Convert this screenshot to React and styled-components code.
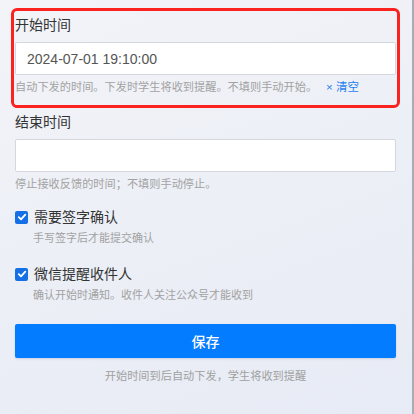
import React from 'react';
import styled, { createGlobalStyle } from 'styled-components';

const GlobalStyle = createGlobalStyle`
  html, body {
    margin: 0;
    padding: 0;
  }
  body {
    font-family: "Liberation Sans", "Noto Sans CJK SC", sans-serif;
    background: #eceff6;
  }
`;

const Page = styled.div`
  box-sizing: border-box;
  width: 414px;
  min-height: 414px;
  padding: 12px 16px 20px 15px;
  background: linear-gradient(160deg, #f3f4f8 0%, #eceff6 50%, #e7ebf5 100%);
  border-right: 2px solid #a9acb4;
`;

const Field = styled.div`
  padding: 3px 0 9px;
  border-radius: 2px;
  outline: ${p => (p.$highlight ? '3px solid #fa2320' : 'none')};
  outline-offset: 1px;
  margin-bottom: 8px;
`;

const Label = styled.div`
  font-size: 14px;
  line-height: 20px;
  color: #333;
  margin-bottom: 7px;
`;

const Input = styled.input`
  box-sizing: border-box;
  display: block;
  width: 100%;
  height: 33px;
  padding: 0 11px;
  border: 1px solid #d4d7de;
  border-radius: 2px;
  background: #fff;
  font-family: "Liberation Sans", "Noto Sans CJK SC", sans-serif;
  font-size: 14px;
  color: #555;
  outline: none;
`;

const Help = styled.div`
  margin-top: 4px;
  font-size: 11.2px;
  line-height: 16px;
  color: #a2a2a2;
  white-space: nowrap;
`;

const Clear = styled.span`
  margin-left: 9px;
  color: #1f7ff0;
  font-size: 11.5px;
`;

const Check = styled.div`
  margin-top: ${p => p.$top}px;
`;

const CheckRow = styled.label`
  display: flex;
  align-items: center;
  gap: 6px;
  font-size: 14px;
  line-height: 20px;
  color: #333;
`;

const Box = styled.span`
  display: inline-flex;
  align-items: center;
  justify-content: center;
  width: 13px;
  height: 13px;
  border-radius: 2px;
  background: #1570e6;
`;

const CheckDesc = styled.div`
  margin: 3px 0 0 18px;
  font-size: 11px;
  line-height: 16px;
  color: #a2a2a2;
`;

const SaveButton = styled.button`
  display: block;
  width: 100%;
  height: 34px;
  margin-top: 21px;
  border: none;
  border-radius: 2px;
  background: #047cff;
  color: #fff;
  font-family: "Liberation Sans", "Noto Sans CJK SC", sans-serif;
  font-size: 14px;
  font-weight: 500;
  box-shadow: 0 1px 2px rgba(40, 60, 110, 0.15);
`;

const Footer = styled.div`
  margin-top: 10px;
  text-align: center;
  font-size: 11.2px;
  line-height: 16px;
  color: #a0a0a0;
`;

const Tick = () => (
  <svg width="10" height="10" viewBox="0 0 10 10">
    <path d="M1.8 5.2 L4 7.3 L8.3 2.6" fill="none" stroke="#fff" strokeWidth="1.8" strokeLinecap="round" strokeLinejoin="round" />
  </svg>
);

const CheckItem = ({ top, label, desc }) => (
  <Check $top={top}>
    <CheckRow>
      <Box><Tick /></Box>
      {label}
    </CheckRow>
    <CheckDesc>{desc}</CheckDesc>
  </Check>
);

export default function App() {
  return (
    <Page>
      <GlobalStyle />
      <Field $highlight>
        <Label>开始时间</Label>
        <Input defaultValue="2024-07-01 19:10:00" />
        <Help>
          自动下发的时间。下发时学生将收到提醒。不填则手动开始。
          <Clear>× 清空</Clear>
        </Help>
      </Field>
      <div>
        <Label>结束时间</Label>
        <Input defaultValue="" />
        <Help>停止接收反馈的时间；不填则手动停止。</Help>
      </div>
      <CheckItem top={15} label="需要签字确认" desc="手写签字后才能提交确认" />
      <CheckItem top={18} label="微信提醒收件人" desc="确认开始时通知。收件人关注公众号才能收到" />
      <SaveButton>保存</SaveButton>
      <Footer>开始时间到后自动下发，学生将收到提醒</Footer>
    </Page>
  );
}
